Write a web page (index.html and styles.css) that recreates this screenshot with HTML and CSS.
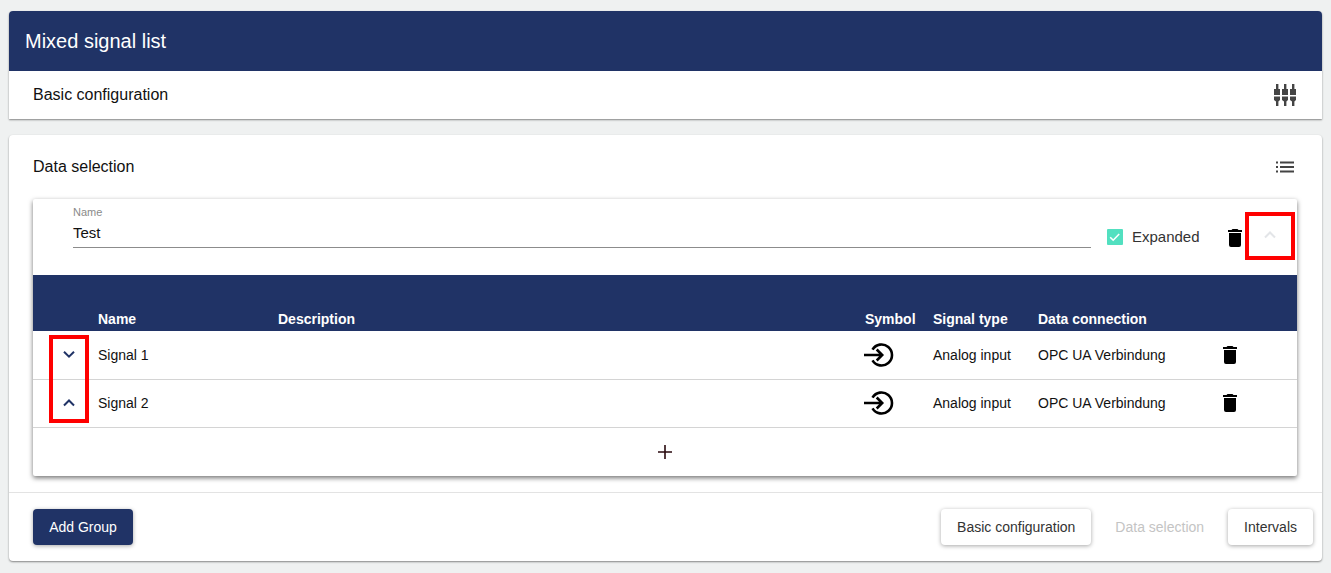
FILE: index.html
```html
<!DOCTYPE html>
<html lang="en">
<head>
    <meta charset="UTF-8">
    <title>Mixed signal list</title>
    <link rel="stylesheet" href="styles.css">
</head>
<body>
    <div class="top-card">
        <div class="title-bar">Mixed signal list</div>
        <div class="section-row">
            <span>Basic configuration</span>
            <svg class="section-icon" width="24" height="24" viewBox="0 0 24 24">
                <path fill="#444" d="M2 1h2.4v5H6v6H0V6h2zM10 1h2.4v5H14v6H8V6h2zM18 1h2.4v5H22v6h-6V6h2z"/>
                <path fill="#444" d="M0 13.5h6V17l-1.6 1.5V23H2v-4.5L0 17zM8 13.5h6V17l-1.6 1.5V23H10v-4.5L8 17zM16 13.5h6V17l-1.6 1.5V23H18v-4.5L16 17z"/>
            </svg>
        </div>
    </div>

    <div class="main-card">
        <div class="section-row data-head">
            <span>Data selection</span>
            <svg class="section-icon" width="24" height="24" viewBox="0 0 24 24">
                <path fill="#444" d="M2 6.5h2v2H2zM6 6.5h14v2H6zM2 11h2v2H2zM6 11h14v2H6zM2 15.5h2v2H2zM6 15.5h14v2H6z"/>
            </svg>
        </div>

        <div class="group-card">
            <div class="group-head">
                <div class="name-field">
                    <label class="field-label">Name</label>
                    <div class="field-value">Test</div>
                </div>
                <div class="check-box">
                    <svg width="16" height="16" viewBox="0 0 16 16"><path d="M3.2 8.2l3 3 6-6.2" fill="none" stroke="#fff" stroke-width="1.6"/></svg>
                </div>
                <span class="check-label">Expanded</span>
                <svg class="trash group-trash" width="24" height="24" viewBox="0 0 24 24"><path fill="#000" d="M19 4h-3.5l-1-1h-5l-1 1H5v2h14zM6 19a2 2 0 0 0 2 2h8a2 2 0 0 0 2-2V7H6z"/></svg>
                <svg class="group-chevron" width="24" height="24" viewBox="0 0 24 24"><path d="M7 14.5l5-5 5 5" fill="none" stroke="#e3e5e8" stroke-width="2"/></svg>
            </div>

            <table class="signals">
                <colgroup>
                    <col class="col-toggle">
                    <col class="col-name">
                    <col class="col-desc">
                    <col class="col-symbol">
                    <col class="col-type">
                    <col class="col-conn">
                    <col>
                </colgroup>
                <thead>
                    <tr>
                        <th></th>
                        <th>Name</th>
                        <th>Description</th>
                        <th>Symbol</th>
                        <th>Signal type</th>
                        <th>Data connection</th>
                        <th></th>
                    </tr>
                </thead>
                <tbody>
                    <tr>
                        <td class="toggle"><svg width="24" height="24" viewBox="0 0 24 24"><path d="M7 8.7l5 5 5-5" fill="none" stroke="#203366" stroke-width="2"/></svg></td>
                        <td>Signal 1</td>
                        <td></td>
                        <td class="symbol"><svg width="32" height="32" viewBox="0 0 32 32"><path d="M10.5 10.6a10.5 10.5 0 1 1 0 10.8M2 16h17M14.7 10.5l5.5 5.5-5.5 5.5" fill="none" stroke="#000" stroke-width="2.6"/></svg></td>
                        <td>Analog input</td>
                        <td>OPC UA Verbindung</td>
                        <td class="row-trash"><svg width="24" height="24" viewBox="0 0 24 24"><path fill="#000" d="M19 4h-3.5l-1-1h-5l-1 1H5v2h14zM6 19a2 2 0 0 0 2 2h8a2 2 0 0 0 2-2V7H6z"/></svg></td>
                    </tr>
                    <tr>
                        <td class="toggle"><svg width="24" height="24" viewBox="0 0 24 24"><path d="M7 14.5l5-5 5 5" fill="none" stroke="#203366" stroke-width="2"/></svg></td>
                        <td>Signal 2</td>
                        <td></td>
                        <td class="symbol"><svg width="32" height="32" viewBox="0 0 32 32"><path d="M10.5 10.6a10.5 10.5 0 1 1 0 10.8M2 16h17M14.7 10.5l5.5 5.5-5.5 5.5" fill="none" stroke="#000" stroke-width="2.6"/></svg></td>
                        <td>Analog input</td>
                        <td>OPC UA Verbindung</td>
                        <td class="row-trash"><svg width="24" height="24" viewBox="0 0 24 24"><path fill="#000" d="M19 4h-3.5l-1-1h-5l-1 1H5v2h14zM6 19a2 2 0 0 0 2 2h8a2 2 0 0 0 2-2V7H6z"/></svg></td>
                    </tr>
                </tbody>
            </table>

            <div class="add-row">
                <svg width="24" height="24" viewBox="0 0 24 24"><path fill="#2a0a0f" d="M5 11.2h6.2V5h1.6v6.2H19v1.6h-6.2V19h-1.6v-6.2H5z"/></svg>
            </div>
        </div>

        <div class="footer">
            <button class="btn btn-primary">Add Group</button>
            <div class="footer-nav">
                <button class="btn">Basic configuration</button>
                <button class="btn btn-disabled">Data selection</button>
                <button class="btn">Intervals</button>
            </div>
        </div>
    </div>

    <div class="mark mark-group"></div>
    <div class="mark mark-rows"></div>
</body>
</html>
```

FILE: styles.css
```css
html, body {
    height: 100%;
}
body {
    margin: 0;
    padding: 11px 9px 0;
    box-sizing: border-box;
    position: relative;
    overflow: hidden;
    background-color: #eff1f1;
    font-family: "Liberation Sans", Arial, sans-serif;
    font-size: 14px;
    color: #111;
}
.top-card {
    background-color: #fff;
    border-radius: 4px 4px 0 0;
    box-shadow: 0 1px 2px rgba(0, 0, 0, 0.45);
}
.title-bar {
    height: 60px;
    padding-left: 16px;
    display: flex;
    align-items: center;
    background-color: #203366;
    border-radius: 4px 4px 0 0;
    color: #fff;
    font-size: 20px;
}
.section-row {
    height: 48px;
    padding: 0 24px;
    display: flex;
    align-items: center;
    justify-content: space-between;
    font-size: 16px;
}
.main-card {
    margin-top: 16px;
    height: 426px;
    background-color: #fff;
    border-radius: 4px;
    box-shadow: 0 1px 2px rgba(0, 0, 0, 0.45);
}
.data-head {
    height: 64px;
}
.group-card {
    margin: 0 25px 0 24px;
    height: 277px;
    background-color: #fff;
    box-shadow: 0 2px 5px rgba(0, 0, 0, 0.55);
    border-radius: 2px;
}
.group-head {
    height: 76px;
    padding-left: 40px;
    display: flex;
    align-items: flex-start;
}
.name-field {
    width: 1018px;
    height: 48px;
    border-bottom: 1px solid #8c8c8c;
}
.field-label {
    display: block;
    padding-top: 7px;
    font-size: 11px;
    line-height: 12px;
    color: #8a8a8a;
}
.field-value {
    margin-top: 6px;
    font-size: 15px;
    line-height: 18px;
}
.check-box {
    width: 16px;
    height: 16px;
    margin: 30px 0 0 16px;
    background-color: #52e0c0;
    border-radius: 1px;
}
.check-box svg {
    display: block;
}
.check-label {
    margin: 29px 0 0 9px;
    line-height: 17px;
    width: 68px;
    font-size: 15px;
    color: #333;
}
.group-trash {
    margin: 27px 0 0 23px;
}
.group-chevron {
    margin: 24px 0 0 11px;
}
.signals {
    width: 100%;
    table-layout: fixed;
    border-collapse: collapse;
}
.col-toggle { width: 65px; }
.col-name { width: 180px; }
.col-desc { width: 587px; }
.col-symbol { width: 68px; }
.col-type { width: 105px; }
.col-conn { width: 184px; }
.signals th {
    height: 56px;
    padding: 0 0 4px;
    box-sizing: border-box;
    vertical-align: bottom;
    text-align: left;
    background-color: #203366;
    color: #fff;
    font-size: 14px;
    line-height: 16px;
}
.signals td {
    height: 48px;
    padding: 0;
    border-bottom: 1px solid #d4d4d4;
    box-sizing: border-box;
    font-size: 14px;
}
.signals svg {
    display: block;
}
.toggle svg {
    margin-left: 24px;
}
.symbol svg {
    margin-left: -3px;
}
.row-trash svg {
    margin-left: -4px;
}
.add-row {
    height: 49px;
    display: flex;
    align-items: center;
    justify-content: center;
}
.footer {
    margin-top: 16px;
    height: 69px;
    padding: 16px 9px 0 24px;
    border-top: 1px solid #e3e3e3;
    box-sizing: border-box;
    display: flex;
    justify-content: space-between;
    align-items: flex-start;
}
.footer-nav {
    display: flex;
    gap: 12px;
}
.btn {
    height: 36px;
    padding: 0 16px;
    border: 0;
    border-radius: 4px;
    background-color: #fff;
    color: #333;
    font-family: inherit;
    font-size: 14px;
    box-shadow: 0 1px 4px rgba(0, 0, 0, 0.35);
}
.btn-primary {
    width: 100px;
    padding: 0;
    background-color: #203366;
    color: #fff;
}
.btn-disabled {
    color: #c4c4c4;
    box-shadow: none;
    padding: 0 12px;
}
.mark {
    position: absolute;
    box-sizing: border-box;
    border: 4px solid #f00;
}
.mark-group {
    left: 1245px;
    top: 212px;
    width: 50px;
    height: 48px;
}
.mark-rows {
    left: 49px;
    top: 335px;
    width: 40px;
    height: 88px;
}
```
